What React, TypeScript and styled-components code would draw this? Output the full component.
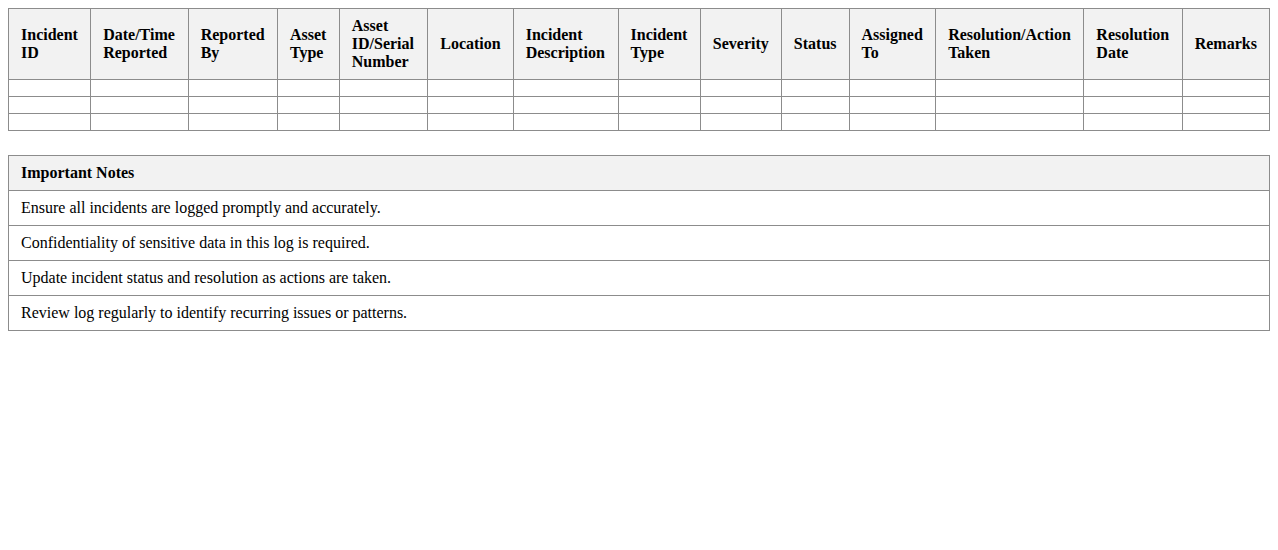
import styled, { createGlobalStyle } from 'styled-components';

const GlobalStyle = createGlobalStyle`
  body {
    margin: 8px;
    background: #ffffff;
    font-family: "Liberation Serif", "Times New Roman", serif;
    color: #000000;
  }
`;

const Table = styled.table<{ $gap?: number }>`
  width: 100%;
  border-collapse: collapse;
  margin-bottom: ${({ $gap }) => $gap ?? 0}px;
  font-family: "Liberation Serif", "Times New Roman", serif;
  font-size: 16px;
`;

const HeadCell = styled.th`
  border: 1px solid #8c8c8c;
  background: #f2f2f2;
  padding: 8px 12px;
  text-align: left;
  font-weight: bold;
`;

const Cell = styled.td`
  border: 1px solid #8c8c8c;
  padding: 8px 12px;
  text-align: left;
`;

const COLUMNS = [
  'Incident ID',
  'Date/Time Reported',
  'Reported By',
  'Asset Type',
  'Asset ID/Serial Number',
  'Location',
  'Incident Description',
  'Incident Type',
  'Severity',
  'Status',
  'Assigned To',
  'Resolution/Action Taken',
  'Resolution Date',
  'Remarks',
];

const NOTES = [
  'Ensure all incidents are logged promptly and accurately.',
  'Confidentiality of sensitive data in this log is required.',
  'Update incident status and resolution as actions are taken.',
  'Review log regularly to identify recurring issues or patterns.',
];

export default function App() {
  return (
    <>
      <GlobalStyle />
      <Table $gap={24}>
        <thead>
          <tr>
            {COLUMNS.map((c) => (
              <HeadCell key={c}>{c}</HeadCell>
            ))}
          </tr>
        </thead>
        <tbody>
          {[0, 1, 2].map((r) => (
            <tr key={r}>
              {COLUMNS.map((c) => (
                <Cell key={c} />
              ))}
            </tr>
          ))}
        </tbody>
      </Table>

      <Table>
        <thead>
          <tr>
            <HeadCell>Important Notes</HeadCell>
          </tr>
        </thead>
        <tbody>
          {NOTES.map((n) => (
            <tr key={n}>
              <Cell>{n}</Cell>
            </tr>
          ))}
        </tbody>
      </Table>
    </>
  );
}
